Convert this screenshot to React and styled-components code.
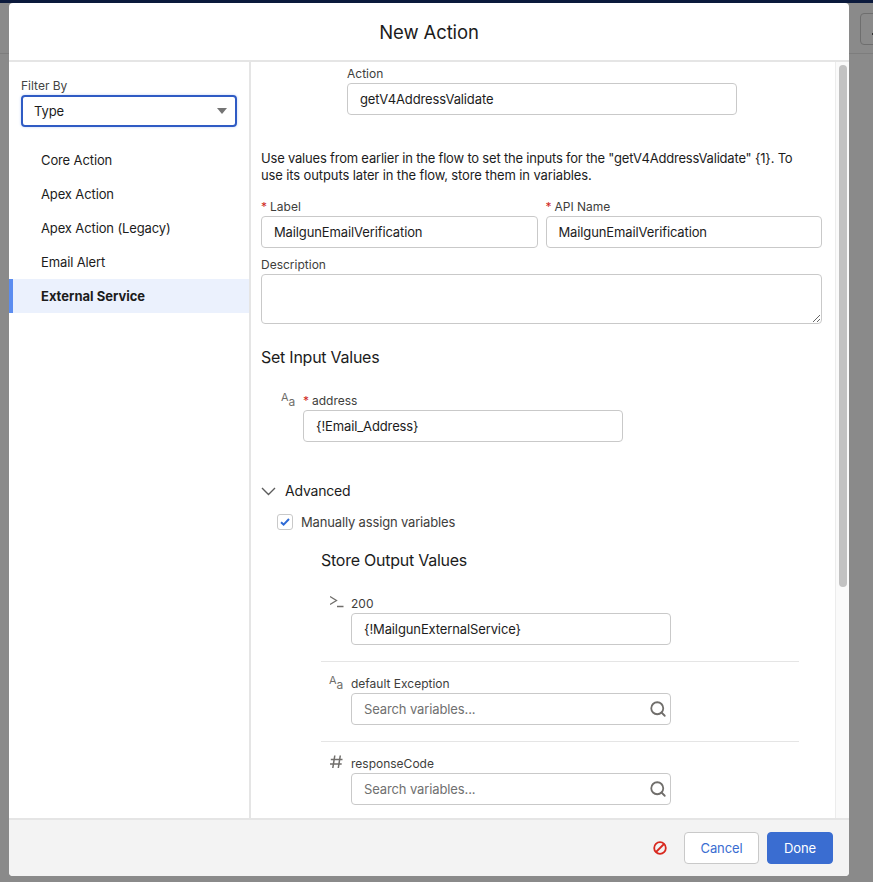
import React from 'react';
import styled, { createGlobalStyle } from 'styled-components';
import { Search } from 'lucide-react';

const GlobalStyle = createGlobalStyle`
  html, body {
    margin: 0;
    padding: 0;
    height: 882px;
    overflow: hidden;
    background: #8a8a8a;
  }
  * { box-sizing: border-box; }
  body, input, textarea, button {
    font-family: Inter, "Liberation Sans", sans-serif;
    color: #1c1c1c;
    letter-spacing: -0.12px;
  }
`;

const Page = styled.div`
  position: relative;
  height: 882px;
  display: flex;
  flex-direction: column;
`;

const TopStrip = styled.div`
  height: 3px;
  background: #0b1a3c;
  flex: none;
`;

const BehindLine = styled.div`
  position: absolute;
  left: 0;
  right: 0;
  top: 53px;
  height: 1px;
  background: #7d7d7d;
`;

const BehindButton = styled.div`
  position: absolute;
  left: 860px;
  top: 13px;
  width: 40px;
  height: 32px;
  border: 1px solid #6e6e6e;
  border-radius: 4px;
  &::after {
    content: '';
    position: absolute;
    left: 11px;
    top: 19px;
    width: 2px;
    height: 2px;
    background: #333;
  }
`;

const Modal = styled.div`
  position: relative;
  width: 840px;
  height: 873px;
  margin-left: 9px;
  background: #fff;
  border-radius: 4px;
  display: flex;
  flex-direction: column;
  overflow: hidden;
`;

const Header = styled.header`
  height: 59px;
  flex: none;
  display: flex;
  align-items: center;
  justify-content: center;
  border-bottom: 2px solid #e5e5e5;
  font-size: 18.5px;
`;

const Body = styled.div`
  flex: 1;
  min-height: 0;
  display: flex;
`;

const Sidebar = styled.aside`
  width: 240px;
  flex: none;
  padding-top: 17px;
`;

const FilterBlock = styled.div`
  padding: 0 12px;
`;

const FilterLabel = styled.div`
  font-size: 12px;
  line-height: 14px;
  color: #444;
  margin-bottom: 2px;
  letter-spacing: 0;
`;

const SelectBox = styled.div`
  height: 32px;
  border: 2px solid #2f5bc4;
  border-radius: 4px;
  box-shadow: 0 0 3px #c3d4f5;
  display: flex;
  align-items: center;
  justify-content: space-between;
  padding: 0 8px 0 11px;
  font-size: 13px;
`;

const Caret = styled.span`
  width: 0;
  height: 0;
  border-left: 5.5px solid transparent;
  border-right: 5.5px solid transparent;
  border-top: 6.5px solid #747474;
`;

const TypeList = styled.ul`
  list-style: none;
  margin: 16px 0 0;
  padding: 0;
`;

const TypeItem = styled.li`
  height: 34px;
  display: flex;
  align-items: center;
  padding-left: ${p => (p.$active ? '28px' : '32px')};
  font-size: 13px;
  font-weight: ${p => (p.$active ? 700 : 400)};
  letter-spacing: ${p => (p.$active ? '0' : '-0.12px')};
  background: ${p => (p.$active ? '#ebf1fd' : 'transparent')};
  border-left: ${p => (p.$active ? '4px solid #5c8df0' : 'none')};
`;

const Main = styled.main`
  flex: 1;
  min-width: 0;
  display: flex;
  border-left: 2px solid #e5e5e5;
`;

const Content = styled.div`
  flex: 1;
  min-width: 0;
  overflow: hidden;
  padding: 0 13px 0 10px;
`;

const Track = styled.div`
  width: 14px;
  flex: none;
  border-left: 1px solid #ececec;
  background: #fafafa;
  padding: 3px 3px 0 3px;
`;

const Thumb = styled.div`
  height: 522px;
  width: 8px;
  border-radius: 4px;
  background: #c2c2c2;
`;

const Field = styled.div`
  width: ${p => p.$width || '100%'};
  margin-left: ${p => p.$indent || '0'};
  margin-top: ${p => p.$top || '0'};
`;

const FieldLabel = styled.label`
  display: block;
  font-size: 12px;
  line-height: 14px;
  color: #3e3e3c;
  margin-bottom: 2px;
  letter-spacing: 0;
`;

const Required = styled.span`
  color: #d0281c;
  margin-right: 3px;
`;

const TextInput = styled.input`
  display: block;
  width: 100%;
  height: 32px;
  border: 1px solid #c9c9c9;
  border-radius: 4px;
  padding: 0 12px;
  font-size: 13px;
  background: #fff;
  outline: none;
  &::placeholder { color: #707070; opacity: 1; }
`;

const Description = styled.textarea`
  display: block;
  width: 100%;
  height: 50px;
  border: 1px solid #c9c9c9;
  border-radius: 4px;
  outline: none;
  padding: 6px 12px;
  font-size: 13px;
`;

const Intro = styled.p`
  margin: 35px 0 0;
  font-size: 13px;
  line-height: 17px;
`;

const IntroLine = styled.span`
  display: block;
  white-space: nowrap;
  letter-spacing: ${p => p.$spacing};
`;

const TwoCols = styled.div`
  display: grid;
  grid-template-columns: 1fr 1fr;
  gap: 8px;
  margin-top: 16px;
`;

const SectionTitle = styled.h2`
  margin: ${p => p.$margin};
  font-size: 16px;
  line-height: 20px;
  font-weight: 400;
  letter-spacing: -0.25px;
`;

const ParamRow = styled.div`
  display: flex;
  align-items: flex-start;
  margin-left: ${p => p.$indent || '0'};
  margin-top: ${p => p.$top || '0'};
`;

const TypeIcon = styled.div`
  width: ${p => p.$slot};
  flex: none;
  color: #706e6b;
  margin-top: -3px;
  display: flex;
`;

const TextGlyph = styled.span`
  display: flex;
  align-items: flex-start;
  margin-left: -1px;
  font-size: 11px;
  line-height: 13px;
  color: #706e6b;
  letter-spacing: 0;
  span { margin-top: 4px; font-size: 12px; }
`;

const ParamField = styled.div`
  width: 320px;
`;

const InputWrap = styled.div`
  position: relative;
`;

const SearchIcon = styled(Search)`
  position: absolute;
  right: 4px;
  top: 7px;
  color: #706e6b;
`;

const AdvancedRow = styled.div`
  display: flex;
  align-items: center;
  gap: 9px;
  margin-top: 40px;
  font-size: 14px;
  line-height: 18px;
  letter-spacing: -0.2px;
`;

const CheckRow = styled.div`
  display: flex;
  align-items: center;
  gap: 8px;
  margin: 14px 0 0 16px;
  font-size: 13px;
  color: #3e3e3c;
  letter-spacing: -0.16px;
`;

const CheckBox = styled.span`
  width: 16px;
  height: 16px;
  border: 1px solid #c9c9c9;
  border-radius: 3px;
  display: flex;
  align-items: center;
  justify-content: center;
`;

const Divider = styled.hr`
  border: none;
  border-top: 1px solid #e5e5e5;
  width: 478px;
  margin: 16px 0 15px 60px;
`;

const Footer = styled.footer`
  height: 58px;
  flex: none;
  border-top: 2px solid #e5e5e5;
  background: #f3f3f3;
  display: flex;
  align-items: center;
  justify-content: flex-end;
  padding-right: 16px;
`;

const ErrorMark = styled.span`
  display: flex;
  margin-right: 17px;
`;

const Button = styled.button`
  height: 32px;
  border-radius: 4px;
  font-size: 13px;
  padding: 0;
  width: ${p => p.$width};
  margin-left: ${p => p.$left || '0'};
  color: ${p => (p.$primary ? '#fff' : '#3a6dd1')};
  background: ${p => (p.$primary ? '#3a6dd1' : '#fff')};
  border: 1px solid ${p => (p.$primary ? '#3a6dd1' : '#c9c9c9')};
`;

const TextTypeGlyph = () => (
  <TextGlyph>A<span>a</span></TextGlyph>
);

const ApexGlyph = () => (
  <svg width="15" height="15" viewBox="0 0 15 15" fill="none" stroke="currentColor" strokeWidth="1.3">
    <path d="M0 2.5 6.5 6.5 0 10.5M7 12.5h6.5" />
  </svg>
);

const NumberGlyph = () => (
  <svg width="14" height="15" viewBox="0 0 14 15" fill="none" stroke="currentColor" strokeWidth="1.5">
    <path d="M4.8 1.5 2.8 14M10.3 1.5 8.3 14M0.8 5.5h11.7M0 10h11.7" />
  </svg>
);

const App = () => (
  <Page>
    <GlobalStyle />
    <BehindLine />
    <BehindButton />
    <TopStrip />
    <Modal>
      <Header>New Action</Header>
      <Body>
        <Sidebar>
          <FilterBlock>
            <FilterLabel>Filter By</FilterLabel>
            <SelectBox>
              Type
              <Caret />
            </SelectBox>
          </FilterBlock>
          <TypeList>
            <TypeItem>Core Action</TypeItem>
            <TypeItem>Apex Action</TypeItem>
            <TypeItem>Apex Action (Legacy)</TypeItem>
            <TypeItem>Email Alert</TypeItem>
            <TypeItem $active>External Service</TypeItem>
          </TypeList>
        </Sidebar>
        <Main>
          <Content>
            <Field $width="390px" $indent="86px" $top="5px">
              <FieldLabel>Action</FieldLabel>
              <TextInput readOnly value="getV4AddressValidate" />
            </Field>
            <Intro>
              <IntroLine $spacing="-0.2px">{'Use values from earlier in the flow to set the inputs for the "getV4AddressValidate" {1}. To'}</IntroLine>
              <IntroLine $spacing="-0.12px">use its outputs later in the flow, store them in variables.</IntroLine>
            </Intro>
            <TwoCols>
              <Field>
                <FieldLabel><Required>*</Required>Label</FieldLabel>
                <TextInput readOnly value="MailgunEmailVerification" />
              </Field>
              <Field>
                <FieldLabel><Required>*</Required>API Name</FieldLabel>
                <TextInput readOnly value="MailgunEmailVerification" />
              </Field>
            </TwoCols>
            <Field $top="10px">
              <FieldLabel>Description</FieldLabel>
              <Description />
            </Field>
            <SectionTitle $margin="23px 0 0">Set Input Values</SectionTitle>
            <ParamRow $indent="21px" $top="27px">
              <TypeIcon $slot="21px"><TextTypeGlyph /></TypeIcon>
              <ParamField>
                <FieldLabel><Required>*</Required>address</FieldLabel>
                <TextInput readOnly value="{!Email_Address}" />
              </ParamField>
            </ParamRow>
            <AdvancedRow>
              <svg width="15" height="9" viewBox="0 0 15 9" fill="none" stroke="#5c5c5c" strokeWidth="1.4">
                <path d="M1 1l6.5 6.5L14 1" />
              </svg>
              Advanced
            </AdvancedRow>
            <CheckRow>
              <CheckBox>
                <svg width="10" height="8" viewBox="0 0 10 8" fill="none" stroke="#2f6bd6" strokeWidth="2">
                  <path d="M1 4.2 3.6 6.6 9 1" />
                </svg>
              </CheckBox>
              Manually assign variables
            </CheckRow>
            <SectionTitle $margin="20px 0 0 60px">Store Output Values</SectionTitle>
            <ParamRow $indent="69px" $top="27px">
              <TypeIcon $slot="21px"><ApexGlyph /></TypeIcon>
              <ParamField>
                <FieldLabel>200</FieldLabel>
                <TextInput readOnly value="{!MailgunExternalService}" />
              </ParamField>
            </ParamRow>
            <Divider />
            <ParamRow $indent="69px">
              <TypeIcon $slot="21px"><TextTypeGlyph /></TypeIcon>
              <ParamField>
                <FieldLabel>default Exception</FieldLabel>
                <InputWrap>
                  <TextInput placeholder="Search variables..." />
                  <SearchIcon size={18} strokeWidth={2.4} />
                </InputWrap>
              </ParamField>
            </ParamRow>
            <Divider />
            <ParamRow $indent="69px">
              <TypeIcon $slot="21px"><NumberGlyph /></TypeIcon>
              <ParamField>
                <FieldLabel>responseCode</FieldLabel>
                <InputWrap>
                  <TextInput placeholder="Search variables..." />
                  <SearchIcon size={18} strokeWidth={2.4} />
                </InputWrap>
              </ParamField>
            </ParamRow>
          </Content>
          <Track><Thumb /></Track>
        </Main>
      </Body>
      <Footer>
        <ErrorMark>
          <svg width="14" height="14" viewBox="0 0 14 14" fill="none" stroke="#d8281e" strokeWidth="1.8">
            <circle cx="7" cy="7" r="5.8" />
            <path d="M3 11 11 3" />
          </svg>
        </ErrorMark>
        <Button $width="75px">Cancel</Button>
        <Button $width="66px" $left="8px" $primary>Done</Button>
      </Footer>
    </Modal>
  </Page>
);

export default App;
